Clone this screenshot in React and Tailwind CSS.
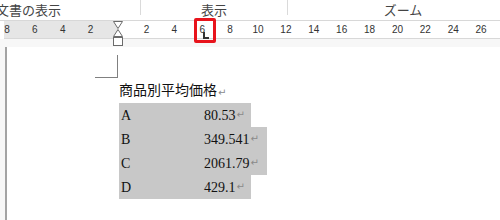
import React from 'react';

const LEFT_MARKS = ['8', '6', '4', '2'];
const RIGHT_MARKS = ['2', '4', '6', '8', '10', '12', '14', '16', '18', '20', '22', '24', '26'];

const ROWS = [
  { key: 'A', value: '80.53', wide: false },
  { key: 'B', value: '349.541', wide: true },
  { key: 'C', value: '2061.79', wide: true },
  { key: 'D', value: '429.1', wide: false },
];

function Hourglass() {
  return (
    <svg width="12" height="26" viewBox="0 0 12 26" className="block">
      <path d="M1.5 0.5 H10.5 L6 7.5 Z" fill="#ffffff" stroke="#6b6b6b" strokeWidth="1" />
      <path d="M6 8.5 L10.5 15.5 H1.5 Z" fill="#ffffff" stroke="#6b6b6b" strokeWidth="1" />
      <rect x="1.5" y="16.5" width="9" height="8" fill="#ffffff" stroke="#6b6b6b" strokeWidth="1" />
    </svg>
  );
}

function ReturnMark() {
  return <span className="text-[10px] leading-none text-[#8a8a8a] font-['DejaVu_Sans',sans-serif] ml-[1px]">↵</span>;
}

export default function App() {
  return (
    <div className="w-[500px] h-[220px] overflow-hidden bg-white relative font-['Noto_Sans_CJK_JP',sans-serif]">
      {/* header labels */}
      <div className="h-[21px] flex items-start border-b border-[#d8d8d8] text-[13px] text-[#444] leading-[19px]">
        <div className="w-[144px] -ml-[4px] whitespace-nowrap">文書の表示</div>
        <div className="w-px h-[15px] bg-[#dadada]" />
        <div className="w-[146px] text-center">表示</div>
        <div className="w-px h-[15px] bg-[#dadada]" />
        <div className="flex-1 text-center pl-[18px]">ズーム</div>
      </div>

      {/* ruler */}
      <div className="h-[18px] flex border-b border-[#d8d8d8] ml-[4px] text-[10px] text-[#333] font-['Liberation_Sans',sans-serif] leading-[18px]">
        <div className="w-[114px] bg-[#e6e6e6] overflow-hidden">
          <div className="flex -ml-[11px]">
            {LEFT_MARKS.map((m, i) => (
              <span key={i} className="w-[27.9px] shrink-0 text-center">{m}</span>
            ))}
          </div>
        </div>
        <div className="flex-1 flex pl-[14.5px]">
          {RIGHT_MARKS.map((m, i) => (
            <span key={i} className="w-[27.9px] shrink-0 text-center">{m}</span>
          ))}
        </div>
      </div>

      <div className="absolute left-[112px] top-[21px]">
        <Hourglass />
      </div>

      <div className="absolute left-[194px] top-[18px] w-[22px] h-[25px] border-[3px] border-[#e8141c] rounded-[2px]">
        <div className="absolute left-[6px] top-[11px] w-[6px] h-[7px] border-l-2 border-b-2 border-[#333]" />
      </div>

      {/* document */}
      <div className="pl-[5px] pt-[8px] bg-[#f7f7f7] h-[181px]">
        <div className="h-full border-l-2 border-[#a3a3a3] bg-white pt-[8px]">
          <div className="ml-[88px] w-[23px] h-[23px] border-r border-b border-[#808080]" />
          <div className="ml-[112px] mt-[2px] h-[18px] text-[14px] leading-[18px] text-[#111] flex items-end">
            商品別平均価格<ReturnMark />
          </div>
          <div className="ml-[112px] mt-[5px] flex flex-col font-['Liberation_Serif',serif] text-[14px] text-[#111]">
            {ROWS.map(r => (
              <div key={r.key} className={`h-[24px] flex items-center bg-[#c8c8c8] ${r.wide ? 'w-[148px]' : 'w-[132px]'}`}>
                <span className="w-[85px] pl-[2px]">{r.key}</span>
                <span>{r.value}</span>
                <ReturnMark />
              </div>
            ))}
          </div>
        </div>
      </div>
    </div>
  );
}
